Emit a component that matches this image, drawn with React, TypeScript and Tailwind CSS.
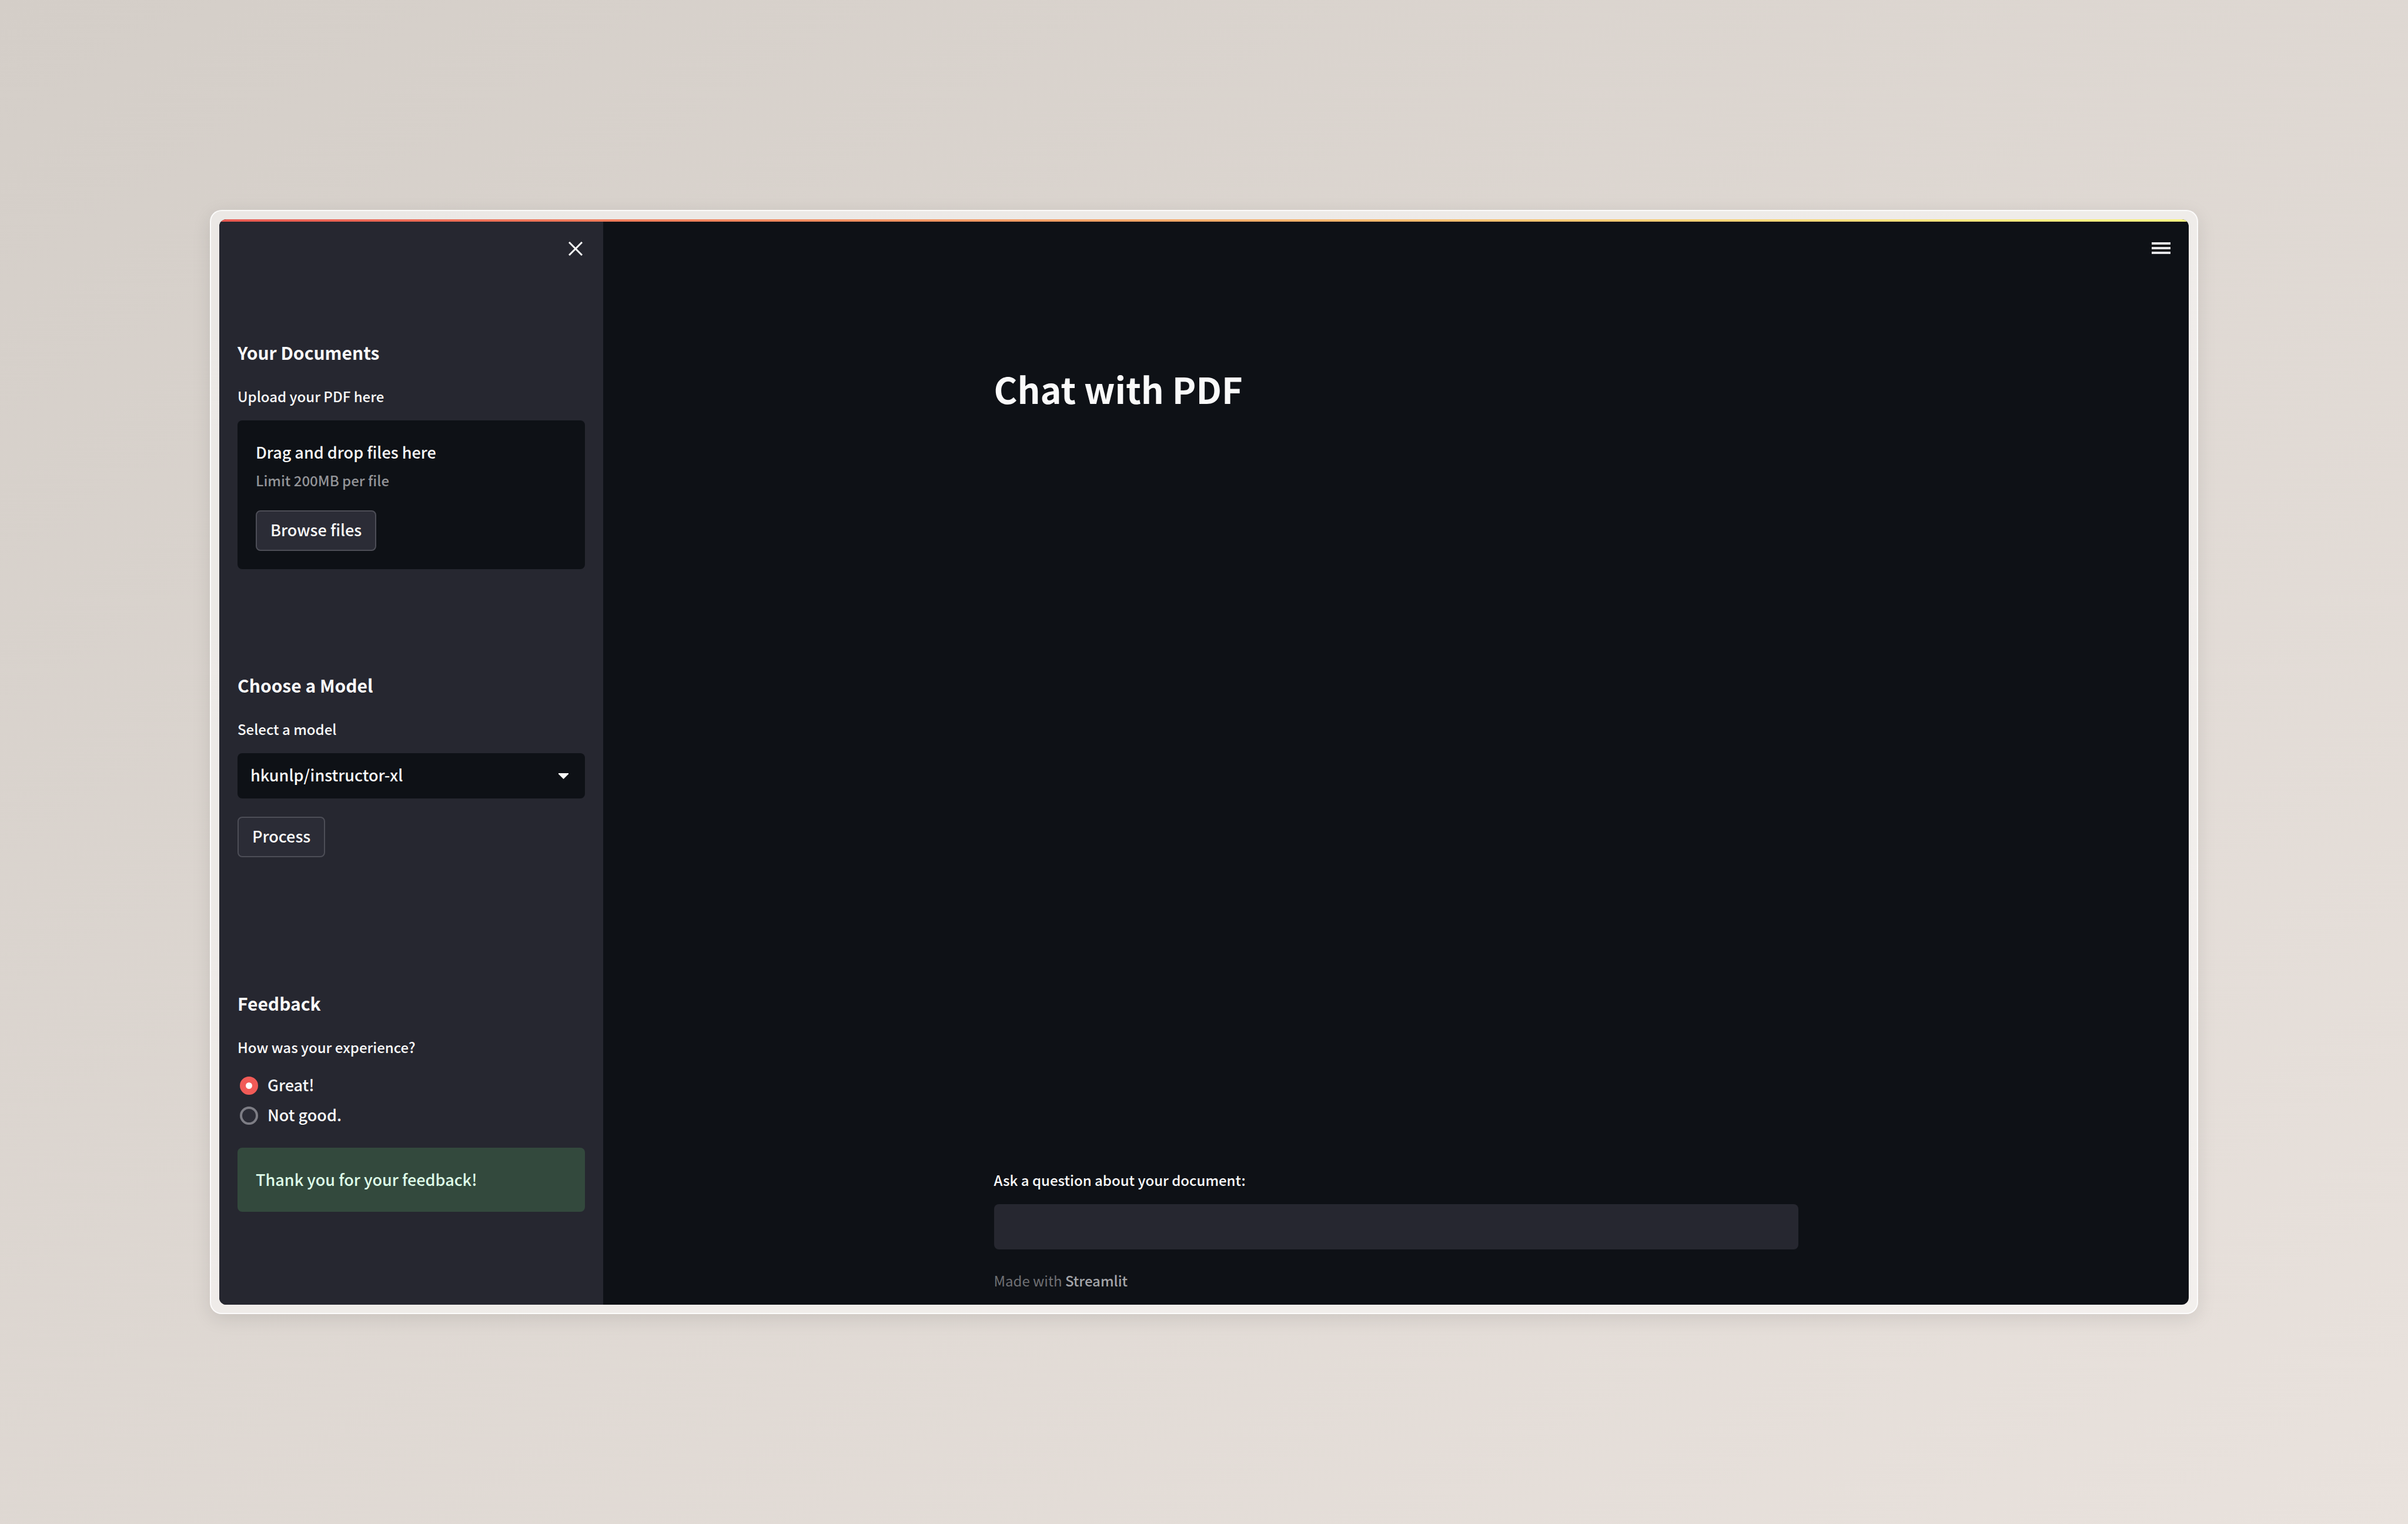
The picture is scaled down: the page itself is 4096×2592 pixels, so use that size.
import { useState } from "react";

const label = "text-[24px] leading-[40px] font-medium";
const heading = "text-[30px] leading-[40px] font-bold";
const body = "text-[27px] leading-[44px] font-medium";
const button =
  "h-[69px] rounded-lg border-2 border-[#4d4e57] bg-[#2b2c36] px-[23px] pb-1 text-[27px] leading-[44px] font-medium";

function Radio({ text, checked, onChange }: { text: string; checked: boolean; onChange: () => void }) {
  return (
    <label className="flex h-[51px] items-center gap-[16px]">
      <input
        type="radio"
        name="experience"
        checked={checked}
        onChange={onChange}
        className="ml-1 h-[31px] w-[31px] appearance-none rounded-full border-4 border-[#7d7d85] bg-[#2b2c36] checked:border-[10px] checked:border-[#f15b57] checked:bg-white"
      />
      <span className={`${body} pb-1`}>{text}</span>
    </label>
  );
}

export default function App() {
  const [choice, setChoice] = useState("great");
  return (
    <div className="flex min-h-screen flex-col bg-linear-to-br from-[#d4cec8] to-[#e9e2dd] px-[357px] py-[357px] font-['Noto_Sans_CJK_SC',sans-serif] text-[#fafafa]">
      <div className="flex flex-1 flex-col rounded-[20px] border-2 border-white/80 bg-white/50 p-[14px] shadow-[0_8px_32px_rgba(0,0,0,0.1)]">
        <div className="flex flex-1 flex-col overflow-hidden rounded-[12px] bg-[#0e1116]">
          <div className="h-1 bg-linear-to-r from-[#e95a52] to-[#fdf784]" />
          <div className="flex flex-1">
            <aside className="w-[653px] bg-[#262730] px-[31px]">
              <div className="flex h-[92px] items-center justify-end">
                <button aria-label="Close sidebar" className="p-1">
                  <svg width="24" height="24" viewBox="0 0 24 24" stroke="#fafafa" strokeWidth="3" fill="none">
                    <path d="M1 1L23 23M23 1L1 23" />
                  </svg>
                </button>
              </div>
              <section className="pt-[110px]">
                <h2 className={heading}>Your Documents</h2>
                <p className={`${label} mt-[35px]`}>Upload your PDF here</p>
                <div className="mt-[21px] h-[253px] rounded-lg bg-[#0e1116] px-[31px] pt-[32px]">
                  <p className={body}>Drag and drop files here</p>
                  <p className={`${label} mt-[6px] text-[#939498]`}>Limit 200MB per file</p>
                  <button className={`${button} mt-[31px]`}>Browse files</button>
                </div>
              </section>
              <section className="pt-[177px]">
                <h2 className={heading}>Choose a Model</h2>
                <label htmlFor="model" className={`${label} mt-[35px] block`}>
                  Select a model
                </label>
                <div className="relative mt-[21px]">
                  <select
                    id="model"
                    className="h-[77px] w-full appearance-none rounded-lg bg-[#0e1116] px-[22px] pb-[2px] text-[27px] font-medium"
                  >
                    <option>hkunlp/instructor-xl</option>
                  </select>
                  <svg className="pointer-events-none absolute top-[34px] right-7" width="17" height="10" viewBox="0 0 17 10" fill="#fafafa">
                    <path d="M0 0H17V1.5L8.5 10L0 1.5Z" />
                  </svg>
                </div>
                <button className={`${button} mt-[31px]`}>Process</button>
              </section>
              <section className="pt-[228px]">
                <h2 className={heading}>Feedback</h2>
                <p className={`${label} mt-[35px]`}>How was your experience?</p>
                <div className="mt-[20px]">
                  <Radio text="Great!" checked={choice === "great"} onChange={() => setChoice("great")} />
                  <Radio text="Not good." checked={choice === "bad"} onChange={() => setChoice("bad")} />
                </div>
                <div className="mt-[29px] flex h-[109px] items-center rounded-lg bg-[#33493d] px-[31px] pb-[2px] text-[#dffde9]">
                  <p className={body}>Thank you for your feedback!</p>
                </div>
              </section>
            </aside>
            <main className="flex flex-1 flex-col">
              <header className="flex h-[89px] items-center justify-end px-[31px]">
                <button aria-label="Menu">
                  <svg width="32" height="20" viewBox="0 0 32 20" fill="#e6e6e8">
                    <path d="M0 0H32V4H0ZM0 8H32V12H0ZM0 16H32V20H0Z" />
                  </svg>
                </button>
              </header>
              <div className="mx-auto flex w-[1368px] flex-1 flex-col pt-[145px] pb-[21px]">
                <h1 className="text-[61px] leading-[100px] font-bold">Chat with PDF</h1>
                <div className="flex-1" />
                <label htmlFor="question" className={label}>
                  Ask a question about your document:
                </label>
                <input id="question" className="mt-[21px] h-[77px] rounded-lg bg-[#262730] px-[22px] text-[27px]" />
                <footer className="mt-[33px] text-[24px] leading-[40px] text-[#6f7074]">
                  Made with{" "}
                  <a href="#" className="font-medium text-[#a3a4a8]">
                    Streamlit
                  </a>
                </footer>
              </div>
            </main>
          </div>
        </div>
      </div>
    </div>
  );
}
